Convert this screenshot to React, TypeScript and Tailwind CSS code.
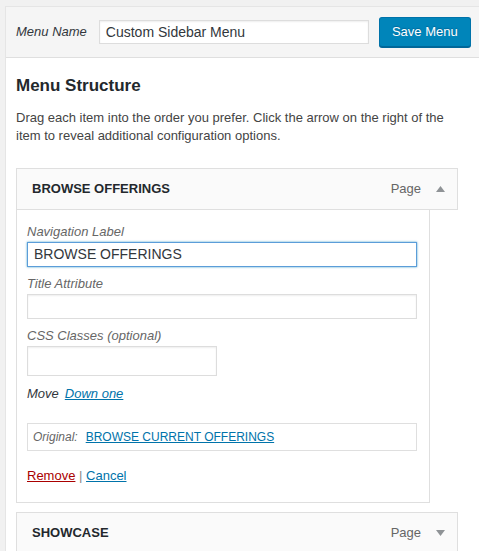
import React from "react";

function Arrow({ up }: { up: boolean }) {
  return (
    <svg width="9" height="6" viewBox="0 0 9 6" className="block">
      {up ? (
        <polygon points="4.5,0 9,6 0,6" fill="#8f9396" />
      ) : (
        <polygon points="0,0 9,0 4.5,6" fill="#8f9396" />
      )}
    </svg>
  );
}

function ItemHandle({ title, up }: { title: string; up: boolean }) {
  return (
    <div className="w-[442px] h-[42px] border border-[#dfdfdf] bg-[#fafafa] flex items-center pl-[15px] pr-[12px]">
      <span className="text-[13px] font-bold text-[#23282d] leading-[18px]">{title}</span>
      <span className="ml-auto text-[13px] text-[#666] leading-[18px]">Page</span>
      <span className="ml-[15px]">
        <Arrow up={up} />
      </span>
    </div>
  );
}

export default function App() {
  return (
    <div className="min-h-[551px] bg-[#f1f1f1] pl-[5px] pt-[6px] font-['Liberation_Sans',Arial,sans-serif] text-[#444] overflow-hidden">
      <div className="border-l border-t border-[#e5e5e5] bg-white min-h-[545px]">
        <div className="h-[51px] bg-[#f5f5f5] border-b border-[#dfdfdf] flex items-center pl-[10px]">
          <span className="italic text-[13px] text-[#32373c]">Menu Name</span>
          <div className="ml-[12px] w-[270px] h-[24px] bg-white border border-[#ddd] shadow-[inset_0_1px_2px_rgba(0,0,0,0.07)] flex items-center pl-[6px] text-[14px] text-[#32373c]">
            Custom Sidebar Menu
          </div>
          <button className="ml-[10px] w-[92px] h-[30px] rounded-[3px] bg-[#0085ba] border border-[#0073aa] border-b-[#006799] shadow-[0_1px_0_#006799] text-white text-[13px] [text-shadow:0_-1px_1px_#006799]">
            Save Menu
          </button>
        </div>
        <div className="pl-[10px]">
          <h2 className="mt-[16px] text-[17px] leading-[24px] font-bold text-[#23282d]">Menu Structure</h2>
          <p className="mt-[11px] text-[13px] leading-[18px] text-[#444]">
            Drag each item into the order you prefer. Click the arrow on the right of the
            <br />
            item to reveal additional configuration options.
          </p>
          <div className="mt-[23px]">
            <ItemHandle title="BROWSE OFFERINGS" up={true} />
            <div className="w-[414px] border border-t-0 border-[#dfdfdf] bg-white px-[10px] pt-[13px] pb-[17px]">
              <div className="italic text-[13px] leading-[18px] text-[#666]">Navigation Label</div>
              <div className="mt-[1px] w-[390px] h-[25px] bg-white border border-[#5b9dd9] shadow-[0_0_2px_rgba(30,140,190,0.8)] flex items-center pl-[6px] text-[14px] text-[#32373c]">
                BROWSE OFFERINGS
              </div>
              <div className="mt-[8px] italic text-[13px] leading-[18px] text-[#666]">Title Attribute</div>
              <div className="mt-[1px] w-[390px] h-[25px] bg-white border border-[#ddd] shadow-[inset_0_1px_2px_rgba(0,0,0,0.07)]" />
              <div className="mt-[8px] italic text-[13px] leading-[18px] text-[#666]">CSS Classes (optional)</div>
              <div className="mt-[1px] w-[190px] h-[30px] bg-white border border-[#ddd] shadow-[inset_0_1px_2px_rgba(0,0,0,0.07)]" />
              <div className="mt-[9px] flex text-[13px] leading-[18px] italic">
                <span className="text-[#32373c]">Move</span>
                <a className="ml-[6px] text-[#0073aa] underline">Down one</a>
              </div>
              <div className="mt-[20px] w-[390px] h-[28px] border border-[#dfdfdf] flex items-center pl-[5px] text-[12px]">
                <span className="italic text-[#666]">Original:</span>
                <a className="ml-[8px] text-[#0073aa] underline">BROWSE CURRENT OFFERINGS</a>
              </div>
              <div className="mt-[16px] text-[13px] leading-[18px]">
                <a className="text-[#a00] underline">Remove</a>
                <span className="text-[#888]"> | </span>
                <a className="text-[#0073aa] underline">Cancel</a>
              </div>
            </div>
            <div className="mt-[9px]">
              <ItemHandle title="SHOWCASE" up={false} />
            </div>
          </div>
        </div>
      </div>
    </div>
  );
}
